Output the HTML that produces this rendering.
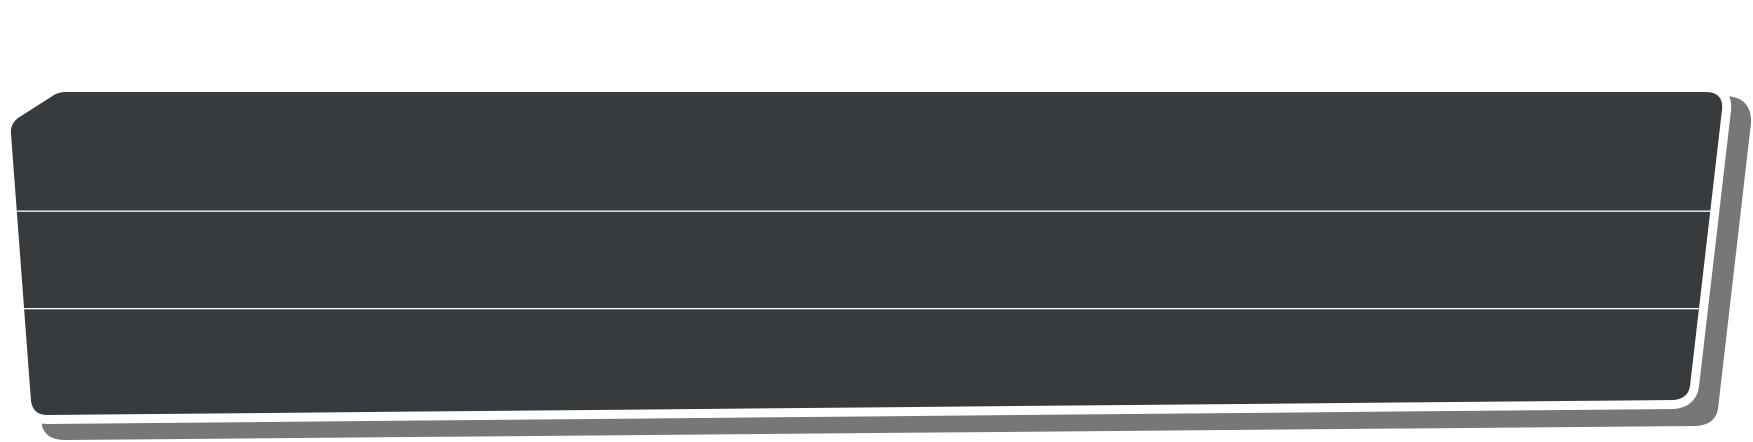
<!DOCTYPE html>
<html><head><meta charset="utf-8"><style>
html,body{margin:0;padding:0;background:#fff;width:1753px;height:442px;overflow:hidden}
svg{display:block}
</style></head><body>
<svg width="1753" height="442" viewBox="0 0 1753 442" xmlns="http://www.w3.org/2000/svg">
<defs>
<clipPath id="c"><path d="M65,92 L1707,92 Q1724,93 1722,110 L1690,386 Q1688,399 1673,400 L47,415 Q33,415 31,401 L11,134 Q10,124 18,118 L54,95 Q59,92 65,92 Z"/></clipPath>
</defs>
<path d="M1500,96 L1727,96 Q1752,98 1751,123 L1718,409 Q1715,425 1696,426 L65,440 Q46,440 42,426 L42,250 Z" fill="#777777"/>
<path d="M65,92 L1707,92 Q1724,93 1722,110 L1690,386 Q1688,399 1673,400 L47,415 Q33,415 31,401 L11,134 Q10,124 18,118 L54,95 Q59,92 65,92 Z" fill="#383b3e" stroke="#ffffff" stroke-width="18" stroke-linejoin="round"/>
<path d="M65,92 L1707,92 Q1724,93 1722,110 L1690,386 Q1688,399 1673,400 L47,415 Q33,415 31,401 L11,134 Q10,124 18,118 L54,95 Q59,92 65,92 Z" fill="#383b3e"/>
<g clip-path="url(#c)">
<rect x="0" y="210.5" width="1753" height="1.3" fill="#ffffff"/>
<rect x="0" y="308" width="1753" height="1.3" fill="#ffffff"/>
</g>
</svg>
</body></html>
